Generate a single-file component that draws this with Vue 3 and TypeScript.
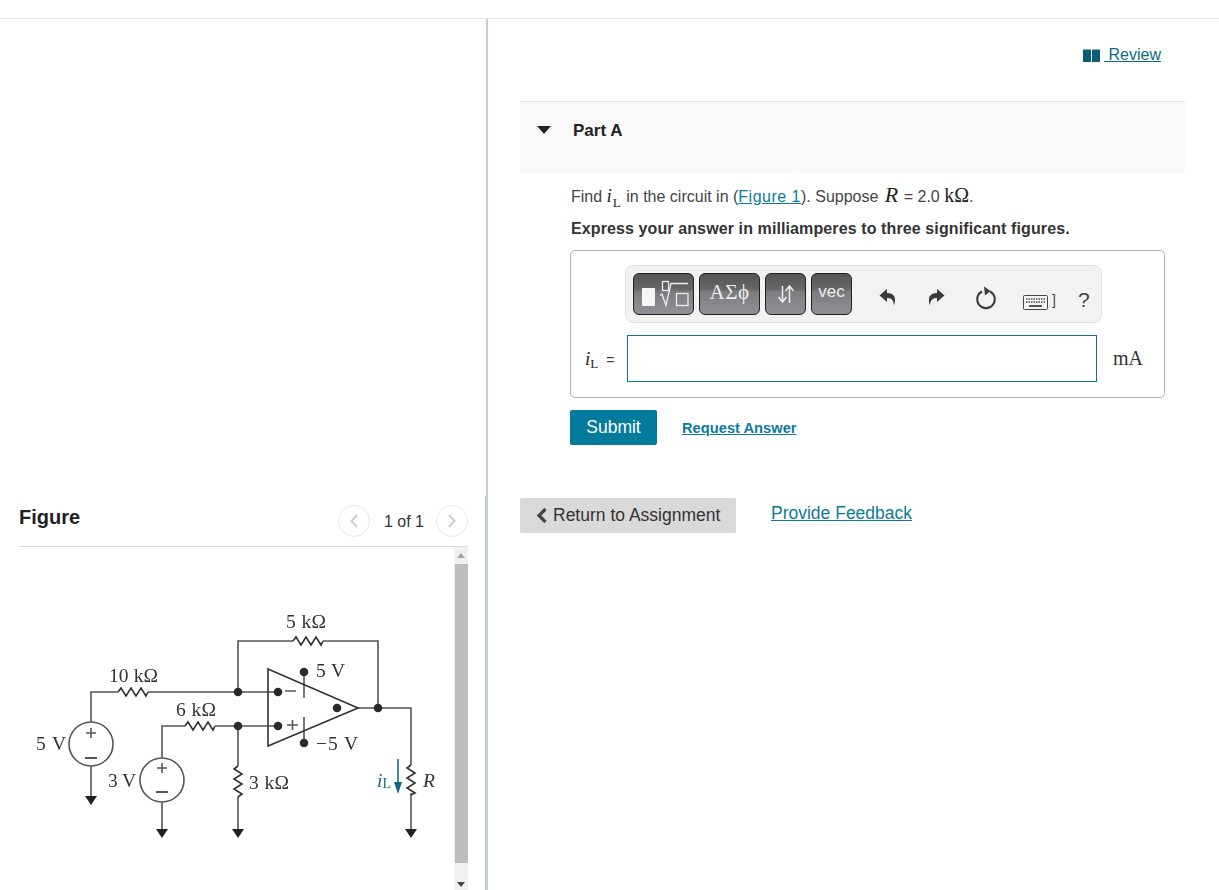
<script setup lang="ts">
const resistors = [
  'M118 692 l3 -4 l5 8 l5 -8 l5 8 l5 -8 l5 8 l2 -4',
  'M185 726 l3 -4 l5 8 l5 -8 l5 8 l5 -8 l5 8 l2 -4',
  'M293 641 l3 -4 l5 8 l5 -8 l5 8 l5 -8 l5 8 l2 -4',
  'M238 766 l-4 3 l8 5 l-8 5 l8 5 l-8 5 l8 5 l-4 3',
  'M411 765 l-4 3 l8 5 l-8 5 l8 5 l-8 5 l8 5 l-4 2'
]
const wires = [
  'M91 722 V692 H118 M148 692 H278',
  'M238 692 V641 H293 M323 641 H378 V708',
  'M358 708 H411 V765 M411 793 V830',
  'M162 758 V726 H185 M215 726 H278 M238 726 V766 M238 797 V830',
  'M91 766 V797 M162 802 V830',
  'M304 672 V698 M304 717 V743'
]
const dots = [
  [238, 692], [278, 692], [238, 726], [278, 726], [337, 708], [378, 708], [304, 672], [304, 743]
]
const grounds = [
  [91, 796], [162, 829], [238, 829], [411, 829]
]
const labels = [
  { x: 286, y: 628, w: 40, text: '5 kΩ' },
  { x: 109, y: 682, w: 49, text: '10 kΩ' },
  { x: 176, y: 716, w: 40, text: '6 kΩ' },
  { x: 316, y: 677, w: 29, text: '5 V' },
  { x: 316, y: 750, w: 42, text: '−5 V' },
  { x: 36, y: 750, w: 30, text: '5 V' },
  { x: 108, y: 787, w: 28, text: '3 V' },
  { x: 249, y: 789, w: 40, text: '3 kΩ' }
]
</script>

<template>
  <div class="page">
    <section class="left">
      <div class="figure-panel">
        <div class="figure-head">
          <h2>Figure</h2>
          <div class="pager">
            <button class="round" aria-label="Previous">
              <svg width="10" height="16" viewBox="0 0 10 16"><path d="M8 2 L2.5 8 L8 14" /></svg>
            </button>
            <span>1 of 1</span>
            <button class="round" aria-label="Next">
              <svg width="10" height="16" viewBox="0 0 10 16"><path d="M2 2 L7.5 8 L2 14" /></svg>
            </button>
          </div>
        </div>
        <div class="figure-view">
          <svg class="circuit" width="435" height="343" viewBox="19 547 435 343">
            <g fill="none" stroke="#555" stroke-width="1.6">
              <path v-for="w in wires" :key="w" :d="w" />
              <path v-for="r in resistors" :key="r" :d="r" stroke="#333" />
              <circle cx="91" cy="744" r="22" />
              <circle cx="162" cy="780" r="22" />
              <path d="M268 669 L358 708 L268 746 Z" stroke="#333" />
              <path d="M86 733 H96 M91 728 V738 M157 768 H167 M162 763 V773" />
              <path d="M85 758 H97 M156 792 H168" stroke-width="2" />
              <path d="M285 691 H296 M287 725 H298 M292.500 720 V730" />
            </g>
            <circle v-for="d in dots" :key="d.join()" :cx="d[0]" :cy="d[1]" r="4.300" fill="#2a2a2a" />
            <path
              v-for="g in grounds"
              :key="g.join()"
              :d="`M${g[0] - 6} ${g[1]} h12 l-6 9 Z`"
              fill="#222"
            />
            <text
              v-for="l in labels"
              :key="l.text + l.x"
              :x="l.x"
              :y="l.y"
              :textLength="l.w"
              class="lbl"
            >{{ l.text }}</text>
            <text x="377" y="787" class="lbl ital blue">i<tspan font-size="14" dy="1" font-style="normal">L</tspan></text>
            <text x="423" y="787" class="lbl ital">R</text>
            <path d="M398 759 V785" stroke="#1a6a8c" stroke-width="1.600" />
            <path d="M394 782 h8 l-4 12 Z" fill="#0f6488" />
          </svg>
          <div class="scroll">
            <span class="tip up"></span>
            <div class="thumb"></div>
            <span class="tip down"></span>
          </div>
        </div>
      </div>
    </section>

    <main class="right">
      <div class="review-row">
        <a class="review" href="#">
          <svg width="17" height="13" viewBox="0 0 17 13">
            <path d="M0 0.500 H7.500 L8 1 V13 H0 Z M9 1 L9.500 0.500 H17 V13 H9 Z" fill="#0b5c75" />
          </svg>
          <span>&nbsp;Review</span>
        </a>
      </div>

      <div class="part-head">
        <svg width="14" height="8" viewBox="0 0 14 8"><path d="M0 0 H14 L7 8 Z" fill="#222" /></svg>
        <h3>Part A</h3>
      </div>

      <div class="part-body">
        <p class="question">
          Find <span class="math sym"><i>i</i><sub>L</sub></span> in the circuit in (<a href="#">Figure 1</a>). Suppose
          <span class="math big r"><i>R</i></span> = 2.0 <span class="math big">kΩ</span>.
        </p>
        <p class="instruct">Express your answer in milliamperes to three significant figures.</p>

        <div class="answer">
          <div class="toolbar">
            <button class="tool wide" aria-label="Templates">
              <svg width="59" height="40" viewBox="0 0 59 40">
                <rect x="8" y="14" width="13" height="18" fill="#f6f6f6" />
                <g fill="none" stroke="#eee" stroke-width="1.300">
                  <rect x="28.500" y="7.500" width="6" height="9" />
                  <rect x="42.500" y="19.500" width="11.500" height="12" />
                  <path d="M26 21.500 L28 20 L32 31.500 L37 9.500 H54" />
                </g>
              </svg>
            </button>
            <button class="tool wide greek">ΑΣϕ</button>
            <button class="tool narrow" aria-label="Subscript and superscript">
              <svg width="18" height="22" viewBox="0 0 18 22">
                <path d="M5.500 3 V18 M1.500 14 L5.500 19 L9.500 14 M12.500 20 V4 M8.500 8 L12.500 3 L16.500 8" fill="none" stroke="#eee" stroke-width="1.500" />
              </svg>
            </button>
            <button class="tool narrow vec">vec</button>
            <div class="actions">
              <svg class="undo" width="18" height="18" viewBox="0 0 18 18">
                <path d="M8 1 L0.500 7.500 L8 14 V10 C12 10 14.500 11.500 15 17.500 C17.500 11 16 5 8 5 Z" fill="#3a3a3a" />
              </svg>
              <svg class="redo" width="18" height="18" viewBox="0 0 18 18">
                <path d="M10 1 L17.500 7.500 L10 14 V10 C6 10 3.500 11.500 3 17.500 C0.500 11 2 5 10 5 Z" fill="#3a3a3a" />
              </svg>
              <svg class="reset" width="22" height="24" viewBox="0 0 22 24">
                <path d="M7 5.500 A8.800 8.800 0 1 0 15 5.500" fill="none" stroke="#3a3a3a" stroke-width="2" />
                <path d="M9 0.500 L15.500 5 L10 9.500 Z" fill="#3a3a3a" />
              </svg>
              <svg class="keys" width="25" height="15" viewBox="0 0 25 15">
                <rect x="0.500" y="0.500" width="24" height="14" rx="1" fill="#f5f5f5" stroke="#444" />
                <path d="M3 4 H22 M3 7 H22" stroke="#777" stroke-width="2" stroke-dasharray="1.500 1" />
                <path d="M6 11 H19" stroke="#555" stroke-width="2" />
              </svg>
              <span class="bracket">]</span>
              <span class="help">?</span>
            </div>
          </div>
          <div class="answer-row">
            <span class="math var"><i>i</i><sub>L</sub><em>=</em></span>
            <input type="text" aria-label="Answer" />
            <span class="unit">mA</span>
          </div>
        </div>

        <div class="submit-row">
          <button class="submit">Submit</button>
          <a class="request" href="#">Request Answer</a>
        </div>
      </div>

      <div class="footer-row">
        <button class="return">
          <svg width="12" height="17" viewBox="0 0 12 17"><path d="M9.500 2 L3 8.500 L9.500 15" fill="none" stroke="#444" stroke-width="3.200" /></svg>
          Return to Assignment
        </button>
        <a class="feedback" href="#">Provide Feedback</a>
      </div>
    </main>
  </div>
</template>

<style>
html,
body {
  margin: 0;
  background: #fff;
}
</style>

<style scoped>
.page {
  box-sizing: border-box;
  width: 1219px;
  height: 872px;
  margin-top: 18px;
  border-top: 1px solid #e5e5e5;
  display: grid;
  grid-template-columns: 486px 1fr;
  overflow: hidden;
  font-family: "Liberation Sans", Arial, sans-serif;
  color: #333;
}

.left {
  box-sizing: border-box;
  height: 871px;
  padding-top: 477px;
}

.figure-panel {
  box-sizing: border-box;
  height: 394px;
  padding: 1px 17px 0 19px;
  border-right: 1px solid #c2d0dd;
}

.figure-head {
  height: 49px;
  display: flex;
  align-items: flex-start;
  justify-content: space-between;
  border-bottom: 1px solid #ddd;
}

.figure-head h2 {
  margin: 8px 0 0;
  font-size: 20px;
  line-height: 24px;
  color: #222;
}

.pager {
  display: flex;
  align-items: center;
  gap: 13px;
  margin-top: 8px;
  font-size: 16px;
  color: #333;
}

.pager span {
  position: relative;
  top: 1px;
  left: 1px;
}

.round {
  box-sizing: border-box;
  width: 32px;
  height: 32px;
  padding: 0;
  border: 1px solid #e8e8e8;
  border-radius: 50%;
  background: #fff;
  display: flex;
  align-items: center;
  justify-content: center;
}

.round path {
  fill: none;
  stroke: #c6ced6;
  stroke-width: 2;
}

.figure-view {
  height: 343px;
  display: flex;
  justify-content: space-between;
}

.circuit {
  display: block;
  filter: blur(0.35px);
}

.lbl {
  font-family: "Liberation Serif", serif;
  font-size: 19.500px;
  fill: #333;
}

.ital {
  font-style: italic;
}

.blue {
  fill: #1a6a8c;
}

.scroll {
  width: 14px;
  background: #f1f1f1;
  display: flex;
  flex-direction: column;
  align-items: center;
}

.thumb {
  width: 13px;
  height: 299px;
  background: #bdbdbd;
}

.tip {
  width: 0;
  height: 0;
  border-left: 4px solid transparent;
  border-right: 4px solid transparent;
}

.tip.up {
  margin: 6px 0 6px;
  border-bottom: 5px solid #a3a3a3;
}

.tip.down {
  margin-top: 19px;
  border-top: 5px solid #444;
}

.right {
  box-sizing: border-box;
  height: 871px;
  border-left: 2px solid #c2d0dd;
  padding: 0 34px 0 32px;
}

.review-row {
  height: 82px;
  display: flex;
  justify-content: flex-end;
  align-items: flex-start;
  padding-right: 24px;
}

.review {
  margin-top: 26px;
  display: flex;
  align-items: center;
  font-size: 16px;
  line-height: 20px;
  color: #0d6a86;
}

.review svg {
  margin-right: 4px;
}

.part-head {
  box-sizing: border-box;
  height: 72px;
  border-top: 1px solid #e5e5e5;
  background: #f9f9f9;
  display: flex;
  align-items: flex-start;
  padding: 24px 0 0 17px;
}

.part-head h3 {
  margin: -6px 0 0 22px;
  font-size: 17px;
  line-height: 22px;
  color: #222;
}

.part-body {
  padding-left: 50px;
  padding-right: 20px;
}

.question {
  margin: 12px 0 0 1px;
  font-size: 16px;
  line-height: 20px;
  color: #444;
}

.question a {
  color: #0d7a9c;
  letter-spacing: 0.5px;
}

.math {
  font-family: "Liberation Serif", serif;
  color: #222;
}

.math i {
  font-style: italic;
}

.math sub {
  font-size: 13px;
  line-height: 0;
}

.sym {
  font-size: 19px;
  letter-spacing: 1px;
}

.big {
  font-size: 20px;
}

.big.r {
  font-size: 22px;
  margin: 0 1px 0 2px;
}

.instruct {
  margin: 12px 0 0 1px;
  font-size: 16px;
  line-height: 20px;
  font-weight: 700;
  letter-spacing: 0.108px;
  color: #333;
}

.answer {
  box-sizing: border-box;
  height: 148px;
  margin-top: 11px;
  border: 1px solid #b0b0b0;
  border-radius: 5px;
  padding: 14px 0 0 54px;
}

.toolbar {
  box-sizing: border-box;
  width: 477px;
  height: 58px;
  background: #f2f2f2;
  border: 1px solid #e0e0e0;
  border-radius: 8px;
  display: flex;
  gap: 5px;
  padding: 7px 0 0 7px;
}

.tool {
  box-sizing: border-box;
  height: 42px;
  padding: 0;
  border: 1px solid #222;
  border-radius: 6px;
  background: linear-gradient(#555 0, #666 38%, #7c7c80 44%, #909095 100%);
  color: #eee;
  display: flex;
  align-items: center;
  justify-content: center;
}

.wide {
  width: 61px;
}

.narrow {
  width: 41px;
}

.greek {
  font-family: "Liberation Serif", serif;
  font-size: 21px;
  letter-spacing: 0.500px;
  padding-bottom: 4px;
}

.vec {
  font-family: "Liberation Sans", sans-serif;
  font-size: 17px;
  align-items: flex-start;
  padding-top: 8px;
}

.actions {
  flex: 1;
  position: relative;
}

.actions > * {
  position: absolute;
}

.undo {
  left: 22px;
  top: 15px;
}

.redo {
  left: 70px;
  top: 15px;
}

.reset {
  left: 118px;
  top: 13px;
}

.keys {
  left: 166px;
  top: 22px;
}

.bracket {
  left: 195px;
  top: 19px;
  font-size: 14px;
  color: #444;
}

.help {
  left: 221px;
  top: 15px;
  font-size: 21px;
  color: #444;
}

.answer-row {
  display: flex;
  align-items: center;
  margin: 12px 0 0 -40px;
}

.var {
  width: 42px;
  font-size: 19px;
  display: flex;
  align-items: baseline;
}

.var sub {
  vertical-align: baseline;
  position: relative;
  top: 3px;
}

.var em {
  margin-left: 8px;
  font-style: normal;
  font-family: "Liberation Sans", sans-serif;
  font-size: 14px;
  color: #444;
}

.answer-row input {
  box-sizing: border-box;
  width: 470px;
  height: 47px;
  margin: 0;
  border: 1px solid #0f7391;
  border-radius: 0;
  outline: none;
  background: #fff;
}

.unit {
  margin-left: 16px;
  font-family: "Liberation Serif", serif;
  font-size: 20px;
  color: #333;
}

.submit-row {
  display: flex;
  align-items: center;
  margin-top: 12px;
}

.submit {
  width: 87px;
  height: 35px;
  padding: 0;
  border: 0;
  border-radius: 2px;
  background: #047a9c;
  color: #fff;
  font: 17.500px "Liberation Sans", sans-serif;
}

.request {
  margin-left: 25px;
  font-size: 14.700px;
  font-weight: 700;
  color: #0d7a9c;
}

.footer-row {
  display: flex;
  align-items: flex-start;
  margin-top: 53px;
}

.return {
  box-sizing: border-box;
  width: 216px;
  height: 35px;
  padding: 0 0 0 16px;
  border: 0;
  border-radius: 2px;
  background: #d9d9d9;
  color: #333;
  font: 17.500px "Liberation Sans", sans-serif;
  display: flex;
  align-items: center;
  gap: 5px;
}

.feedback {
  margin-left: 35px;
  font-size: 17.500px;
  line-height: 30px;
  color: #0d7a9c;
}
</style>
